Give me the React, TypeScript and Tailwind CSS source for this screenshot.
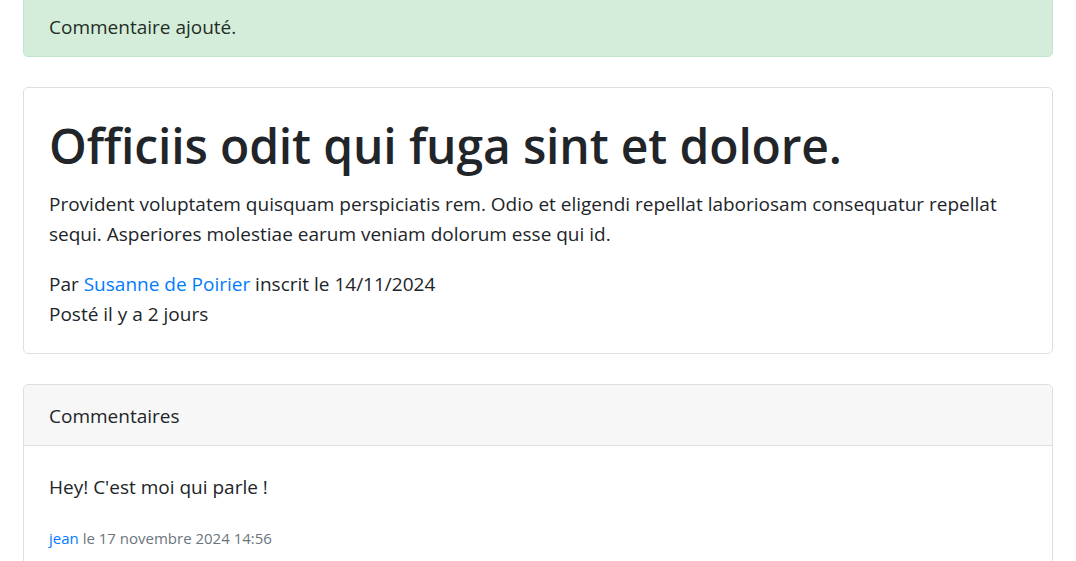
export default function App() {
  return (
    <div className="min-h-screen bg-white text-[#212529] text-[19px] leading-[30px] overflow-hidden" style={{ fontFamily: '"Open Sans", "Noto Sans", sans-serif' }}>
      <div className="px-[23px] mt-[-4px]">
        {/* Flash message */}
        <div className="bg-[#d4edda] border border-[#c3e6cb] text-[#1f2d25] rounded-[5px] px-[25px] pt-[15px] pb-[14px] mb-[30px]">
          Commentaire ajouté.
        </div>

        {/* Post */}
        <div className="border border-[#dfdfdf] rounded-[5px] px-[25px] pt-[26px] pb-[24px] mb-[30px]">
          <h1 className="text-[48px] leading-[60px] font-semibold tracking-[-0.15px] pt-[2px] mb-[13px]">Officiis odit qui fuga sint et dolore.</h1>
          <p className="mb-[20px]">
            Provident voluptatem quisquam perspiciatis rem. Odio et eligendi repellat laboriosam consequatur repellat sequi. Asperiores molestiae earum veniam dolorum esse qui id.
          </p>
          <div>
            Par <a href="#" className="text-[#007bff]">Susanne de Poirier</a> inscrit le 14/11/2024
          </div>
          <div>Posté il y a 2 jours</div>
        </div>

        {/* Comments */}
        <div className="border border-[#dfdfdf] rounded-[5px]">
          <div className="bg-[#f7f7f7] border-b border-[#dfdfdf] px-[25px] pt-[16px] pb-[14px] rounded-t-[5px]">Commentaires</div>
          <div className="px-[25px] pt-[26px] pb-[24px]">
            <p className="mb-[24px]">Hey! C'est moi qui parle !</p>
            <div className="text-[15px] leading-[24px] text-[#6c757d]">
              <a href="#" className="text-[#007bff]">jean</a> le 17 novembre 2024 14:56
            </div>
          </div>
        </div>
      </div>
    </div>
  );
}
